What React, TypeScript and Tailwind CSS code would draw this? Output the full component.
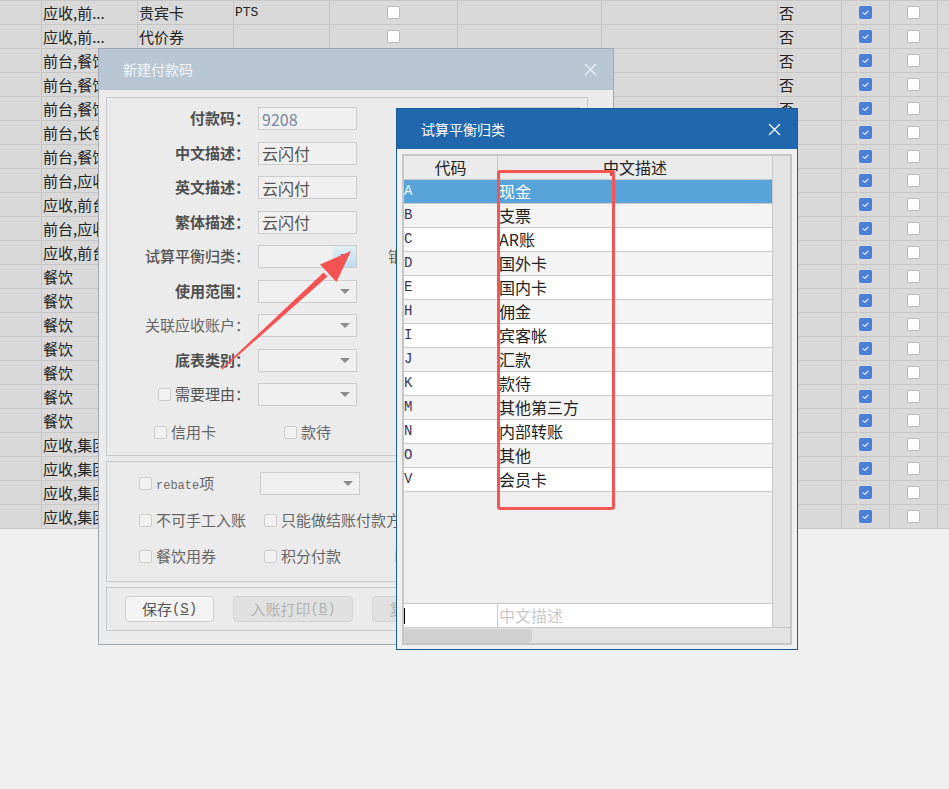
import React from "react";

const groups = [
  "应收,前...",
  "应收,前...",
  "前台,餐饮",
  "前台,餐饮",
  "前台,餐饮",
  "前台,长包房",
  "前台,餐饮",
  "前台,应收",
  "应收,前台",
  "前台,应收",
  "应收,前台",
  "餐饮",
  "餐饮",
  "餐饮",
  "餐饮",
  "餐饮",
  "餐饮",
  "餐饮",
  "应收,集团",
  "应收,集团",
  "应收,集团",
  "应收,集团",
];

const codes = [
  ["A", "现金"],
  ["B", "支票"],
  ["C", "AR账"],
  ["D", "国外卡"],
  ["E", "国内卡"],
  ["H", "佣金"],
  ["I", "宾客帐"],
  ["J", "汇款"],
  ["K", "款待"],
  ["M", "其他第三方"],
  ["N", "内部转账"],
  ["O", "其他"],
  ["V", "会员卡"],
];

const GridBox = ({ on }: { on?: boolean }) =>
  on ? (
    <span className="flex h-[13px] w-[13px] items-center justify-center rounded-[2px] bg-[#4a7fd8]">
      <svg width="9" height="9" viewBox="0 0 9 9">
        <path d="M1.8 4.6 L3.8 6.3 L7.4 2.8" fill="none" stroke="#fff" strokeWidth="1.1" />
      </svg>
    </span>
  ) : (
    <span className="block h-[13px] w-[13px] rounded-[2px] border border-[#b8b8b8] bg-white" />
  );

const Check = () => (
  <span className="block h-[13px] w-[13px] shrink-0 rounded-[2px] border border-[#cdcdcd] bg-[#f1f1f1]" />
);

const Cross = ({ color }: { color: string }) => (
  <svg width="13" height="13" viewBox="0 0 13 13">
    <path d="M1 1 L12 12 M12 1 L1 12" stroke={color} strokeWidth="1.3" />
  </svg>
);

const Caret = () => (
  <span className="block h-0 w-0 border-x-[5px] border-t-[5px] border-x-transparent border-t-[#8c8c8c]" />
);

const Field = ({ value, tone = "text-[#555]" }: { value?: string; tone?: string }) => (
  <div className={`flex h-[23px] w-[99px] items-center border border-[#cdcdcd] bg-[#f0f0f0] pl-[3px] text-[16px] ${tone}`}>
    {value}
  </div>
);

const Select = ({ hot, w = "w-[99px]" }: { hot?: boolean; w?: string }) => (
  <div className={`flex h-[23px] ${w} shrink-0 items-center justify-end border border-[#cdcdcd] bg-[#f0f0f0]`}>
    {hot ? (
      <div className="flex h-full w-[23px] items-center justify-center bg-linear-to-b from-[#e0f1f3] to-[#bddcef]">
        <Caret />
      </div>
    ) : (
      <div className="flex w-[23px] justify-center">
        <Caret />
      </div>
    )}
  </div>
);

const Label = ({ text, cls = "font-bold text-[#4f4f4f]" }: { text: string; cls?: string }) => (
  <div className={`w-[151px] shrink-0 pr-[8px] text-right text-[15px] ${cls}`}>{text}</div>
);

const Opt = ({ text, w }: { text: React.ReactNode; w: string }) => (
  <div className={`flex ${w} shrink-0 items-center gap-[4px] text-[15px] text-[#666]`}>
    <Check />
    <span className="whitespace-nowrap">{text}</span>
  </div>
);

const Btn = ({ label, hot, off, w }: { label: string; hot: string; off?: boolean; w: string }) => (
  <div
    className={`flex h-[26px] ${w} items-center justify-center rounded-[4px] border text-[15px] ${
      off ? "border-[#d4d4d4] bg-[#e1e1e1] text-[#b3b3b3]" : "border-[#cfcfcf] bg-[#f4f4f4] text-[#555]"
    }`}
  >
    {label}
    <span className="font-['Liberation_Mono',monospace] text-[14px]">
      (<span className="underline">{hot}</span>)
    </span>
  </div>
);

export default function App() {
  return (
    <div className="relative h-[789px] w-[949px] overflow-hidden bg-[#f0f0f0] font-['Noto_Sans_CJK_SC',sans-serif]">
      {/* payment code list behind the dialogs */}
      <div className="w-[949px] border-t border-[#c6c6c6]">
        {groups.map((g, i) => (
          <div key={i} className="flex h-[24px] border-b border-[#c6c6c6] bg-[#d9d9d9] text-[15px] leading-[23px] text-[#222]">
            <div className="w-[42px] border-r border-[#c6c6c6]" />
            <div className="w-[96px] overflow-hidden whitespace-nowrap border-r border-[#c6c6c6] pl-[1px]">{g}</div>
            <div className="w-[96px] border-r border-[#c6c6c6] pl-[1px]">{i === 0 ? "贵宾卡" : i === 1 ? "代价券" : ""}</div>
            <div className="w-[96px] border-r border-[#c6c6c6] pl-[1px] font-['Liberation_Mono',monospace] text-[13px]">
              {i === 0 ? "PTS" : ""}
            </div>
            <div className="flex w-[128px] items-center justify-center border-r border-[#c6c6c6]">
              <GridBox />
            </div>
            <div className="w-[144px] border-r border-[#c6c6c6]" />
            <div className="w-[176px] border-r border-[#c6c6c6]" />
            <div className="w-[64px] border-r border-[#c6c6c6] pl-[1px]">否</div>
            <div className="flex w-[48px] items-center justify-center border-r border-[#c6c6c6]">
              <GridBox on />
            </div>
            <div className="flex w-[48px] items-center justify-center border-r border-[#c6c6c6]">
              <GridBox />
            </div>
            <div className="flex-1" />
          </div>
        ))}
      </div>

      {/* 新建付款码 dialog */}
      <div className="absolute left-[98px] top-[48px] flex h-[597px] w-[516px] flex-col border border-[#9ea8b3] bg-[#ebebeb]">
        <div className="flex h-[41px] shrink-0 items-center justify-between bg-[#b8c5d3] pl-[24px] pr-[16px]">
          <span className="text-[14px] text-[#f3f6f9]">新建付款码</span>
          <Cross color="#eef2f6" />
        </div>
        <div className="flex flex-1 flex-col gap-[5px] pl-[7px] pr-[25px] pt-[7px]">
          <div className="flex h-[359px] flex-col gap-[11.5px] border border-[#c9c9c9] pt-[9px]">
            <div className="flex h-[23px] items-center">
              <Label text="付款码：" />
              <Field value="9208" tone="text-[#7686a0]" />
              <div className="ml-[123px] h-[23px] w-[100px] border border-[#cdcdcd] bg-[#f0f0f0]" />
            </div>
            <div className="flex h-[23px] items-center">
              <Label text="中文描述：" />
              <Field value="云闪付" />
            </div>
            <div className="flex h-[23px] items-center">
              <Label text="英文描述：" />
              <Field value="云闪付" />
            </div>
            <div className="flex h-[23px] items-center">
              <Label text="繁体描述：" />
              <Field value="云闪付" />
            </div>
            <div className="flex h-[23px] items-center">
              <Label text="试算平衡归类：" cls="font-medium text-[#555]" />
              <Select hot />
              <span className="ml-[31px] whitespace-nowrap text-[15px] text-[#666]">银</span>
            </div>
            <div className="flex h-[23px] items-center">
              <Label text="使用范围：" />
              <Select />
            </div>
            <div className="flex h-[23px] items-center">
              <Label text="关联应收账户：" cls="text-[#666]" />
              <Select />
            </div>
            <div className="flex h-[23px] items-center">
              <Label text="底表类别：" />
              <Select />
            </div>
            <div className="flex h-[23px] items-center">
              <div className="flex w-[151px] shrink-0 items-center justify-end gap-[4px] pr-[8px] text-[15px] text-[#555]">
                <Check />
                <span>需要理由：</span>
              </div>
              <Select />
            </div>
            <div className="mt-[3px] flex h-[23px] items-center pl-[47px]">
              <Opt text="信用卡" w="w-[130px]" />
              <Opt text="款待" w="w-[100px]" />
            </div>
          </div>

          <div className="flex h-[121px] flex-col gap-[13.5px] border border-[#c9c9c9] pl-[32px] pt-[10px]">
            <div className="flex h-[23px] items-center">
              <Opt
                w="w-[121px]"
                text={
                  <>
                    <span className="font-['Liberation_Mono',monospace] text-[12px] text-[#6a6a6a]">rebate</span>项
                  </>
                }
              />
              <Select w="w-[100px]" />
            </div>
            <div className="flex h-[23px] items-center">
              <Opt text="不可手工入账" w="w-[125px]" />
              <Opt text="只能做结账付款方式" w="w-[160px]" />
            </div>
            <div className="flex h-[23px] items-center">
              <Opt text="餐饮用券" w="w-[125px]" />
              <Opt text="积分付款" w="w-[131px]" />
              <Opt text="其他" w="w-[80px]" />
            </div>
          </div>

          <div className="flex h-[44px] items-center gap-[19px] border border-[#c9c9c9] pl-[18px]">
            <Btn label="保存" hot="S" w="w-[89px]" />
            <Btn label="入账打印" hot="B" off w="w-[120px]" />
            <Btn label="复制" hot="C" off w="w-[90px]" />
          </div>
        </div>
      </div>

      {/* red annotation arrow */}
      <svg className="pointer-events-none absolute left-0 top-0" width="949" height="789" viewBox="0 0 949 789">
        <polygon points="221.5,368.6 222.4,369.6 327.5,276.6 323.5,272.4" fill="#f45353" />
        <polygon points="351,251 320,264.5 336.5,282" fill="#f45353" />
      </svg>

      {/* 试算平衡归类 picker */}
      <div className="absolute left-[396px] top-[108px] flex h-[542px] w-[402px] flex-col border border-[#1d5b99] bg-[#f0f0f0]">
        <div className="flex h-[40px] shrink-0 items-center justify-between bg-[#2167ad] pl-[24px] pr-[16px]">
          <span className="text-[14px] text-white">试算平衡归类</span>
          <Cross color="#ffffff" />
        </div>
        <div className="mx-[5px] mt-[5px] flex h-[491px] flex-col border-2 border-[#c6c6c6]">
          <div className="flex flex-1">
            <div className="flex w-[369px] flex-col bg-[#efefef]">
              <div className="flex h-[24px] border-b border-[#c8c8c8] bg-[#ebebeb] text-[16px] leading-[23px] text-[#222]">
                <div className="w-[94px] border-r border-[#c8c8c8] text-center">代码</div>
                <div className="flex-1 text-center">中文描述</div>
              </div>
              {codes.map(([c, name], i) => (
                <div
                  key={c}
                  className={`flex h-[24px] border-b border-[#c8c8c8] text-[16px] leading-[23px] ${
                    i === 0 ? "bg-[#58a3d9] text-white" : i % 2 ? "bg-[#f4f4f4] text-[#222]" : "bg-white text-[#222]"
                  }`}
                >
                  <div
                    className={`w-[94px] border-r border-[#c8c8c8] font-['Liberation_Mono',monospace] text-[14px] ${
                      i === 0 ? "text-[#eef6ff]" : "text-[#3b3160]"
                    }`}
                  >
                    {c}
                  </div>
                  <div className="flex-1 pl-[1px]">{name}</div>
                </div>
              ))}
              <div className="flex-1" />
              <div className="flex h-[24px] border-t border-[#c8c8c8] bg-white text-[16px] leading-[23px]">
                <div className="flex w-[94px] items-center border-r border-[#c8c8c8]">
                  <span className="h-[16px] w-px bg-black" />
                </div>
                <div className="flex-1 pl-[1px] text-[#c9c9c9]">中文描述</div>
              </div>
            </div>
            <div className="w-[18px] border-l border-[#c8c8c8] bg-[#e3e3e3]" />
          </div>
          <div className="flex h-[16px] shrink-0 items-center border-t border-[#c8c8c8] bg-[#e3e3e3]">
            <div className="h-[14px] w-[128px] rounded-[2px] bg-[#d0d0d0]" />
          </div>
        </div>
      </div>

      {/* red highlight box */}
      <div className="pointer-events-none absolute left-[497px] top-[170px] h-[340px] w-[118px] rounded-[3px] border-[3px] border-[#f55555]" />
    </div>
  );
}
